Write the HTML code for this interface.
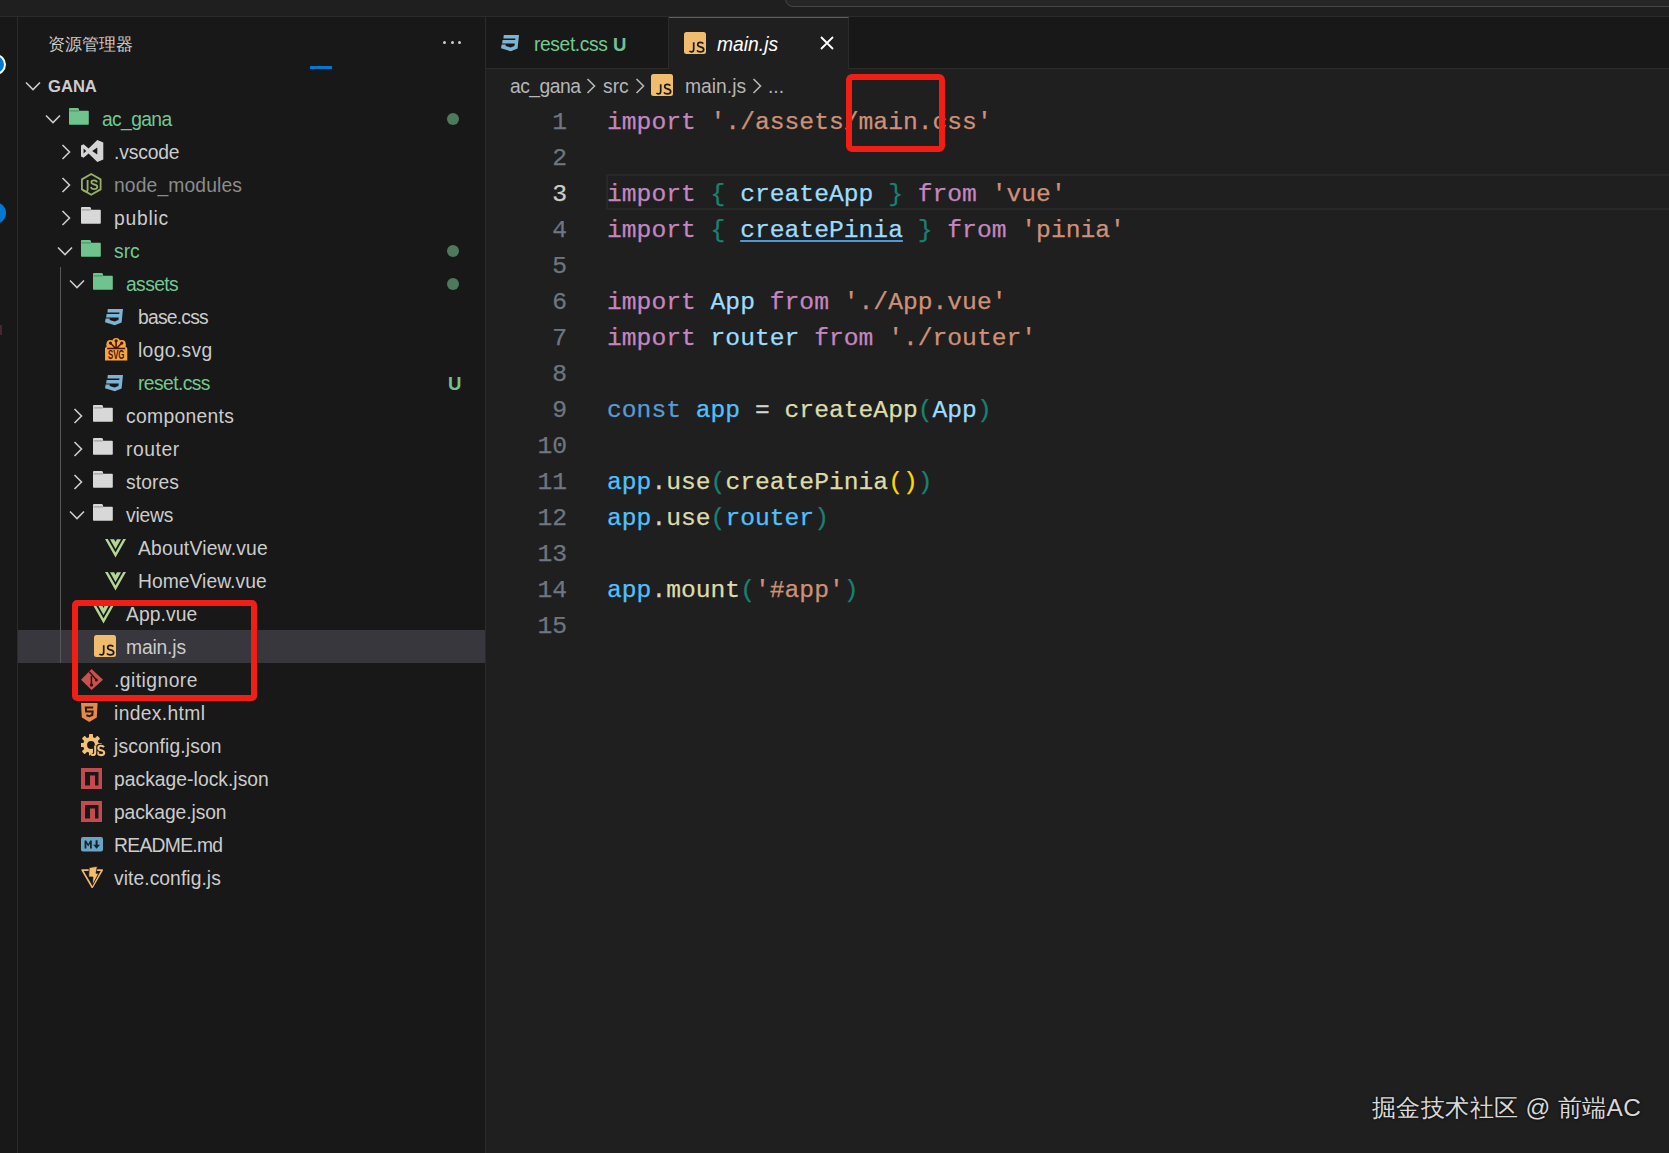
<!DOCTYPE html>
<html><head><meta charset="utf-8">
<style>
*{margin:0;padding:0;box-sizing:border-box}
html,body{width:1669px;height:1153px;overflow:hidden;background:#1f1f1f;font-family:"Liberation Sans",sans-serif;position:relative}
.abs{position:absolute}
.lbl{height:33px;line-height:33px;font-size:19.3px;white-space:nowrap}
.code{position:absolute;left:486px;width:1183px;height:36px;line-height:36px;font-family:"Liberation Mono",monospace;font-size:24.67px;white-space:pre;color:#d4d4d4;-webkit-text-stroke:0.25px currentColor}
.code .ln{position:absolute;left:0;width:81px;text-align:right;color:#6e7681}
.code .tx{position:absolute;left:121px}
.kw{color:#c586c0}.str{color:#ce9178}.fn{color:#dcdcaa}.var{color:#9cdcfe}.cst{color:#4fc1ff}.bl{color:#569cd6}.br1{color:#178272}.br2{color:#ffd700}
.ul{text-decoration:underline;text-decoration-color:#4b9ad6;text-underline-offset:3px}
</style></head><body>
<div class="abs" style="left:0;top:0;width:1669px;height:17px;background:#1f1f1f;border-bottom:1px solid #2b2b2b"></div>
<div class="abs" style="left:785px;top:-30px;width:1000px;height:37px;border:1px solid #454545;border-radius:8px;background:#262626"></div>
<div class="abs" style="left:0;top:17px;width:18px;height:1136px;background:#181818;border-right:1px solid #2b2b2b"></div>
<div class="abs" style="left:-15px;top:54px;width:21px;height:21px;border-radius:50%;background:#0078d4;border:2px solid #ffffff"></div>
<div class="abs" style="left:-16px;top:202px;width:22px;height:22px;border-radius:50%;background:#0078d4"></div>
<div class="abs" style="left:0;top:325px;width:2px;height:10px;background:#4a2430"></div>
<div class="abs" style="left:18px;top:17px;width:468px;height:1136px;background:#181818;border-right:1px solid #2b2b2b"></div>
<div class="abs" style="left:48px;top:28px;font-size:17px;line-height:33px;color:#cccccc">资源管理器</div>
<div class="abs" style="left:443px;top:41px;width:3px;height:3px;border-radius:50%;background:#cccccc"></div>
<div class="abs" style="left:450.5px;top:41px;width:3px;height:3px;border-radius:50%;background:#cccccc"></div>
<div class="abs" style="left:458px;top:41px;width:3px;height:3px;border-radius:50%;background:#cccccc"></div>
<div class="abs" style="left:310px;top:66px;width:22px;height:3px;background:#0078d4"></div>
<svg class="abs" style="left:25px;top:81px" width="16" height="10" viewBox="0 0 16 10"><path d="M1 1.5 L8 8.5 L15 1.5" fill="none" stroke="#cccccc" stroke-width="1.6"/></svg><div class="abs lbl" style="left:48px;top:70px;font-weight:bold;font-size:16.6px;color:#cccccc">GANA</div><svg class="abs" style="left:44.5px;top:113.5px" width="16" height="10" viewBox="0 0 16 10"><path d="M1 1.5 L8 8.5 L15 1.5" fill="none" stroke="#cccccc" stroke-width="1.6"/></svg><svg class="abs" style="left:69px;top:108.4px" width="20" height="17" viewBox="0 0 20 17"><path d="M0 1 Q0 0 1 0 H8.6 Q9.6 0 9.9 1 L10.2 2.8 H19 Q19.8 2.8 19.8 3.6 V16 Q19.8 16.8 19 16.8 H0.8 Q0 16.8 0 16Z" fill="#6fc48d"/><path d="M0.6 2.9 H9.8" stroke="#181818" stroke-width="0.6" opacity="0.6"/></svg><div class="abs lbl" style="left:102px;top:103px;color:#73c991;letter-spacing:-0.633px">ac_gana</div><div class="abs" style="left:447px;top:112.5px;width:12px;height:12px;border-radius:50%;background:#4d7a5c"></div><svg class="abs" style="left:60.5px;top:143.5px" width="10" height="16" viewBox="0 0 10 16"><path d="M1.5 1 L8.5 8 L1.5 15" fill="none" stroke="#cccccc" stroke-width="1.6"/></svg><svg class="abs" style="left:81px;top:139.9px" width="23" height="22" viewBox="0 0 23 22"><path d="M16.3 0 L22.3 2.6 V19.4 L16.3 22 L7.6 13.6 L2.6 17.8 L0 16.4 V5.6 L2.6 4.2 L7.6 8.4Z M16.3 7.6 L11.2 11 L16.3 14.6Z M2.6 8.6 V13.4 L5.2 11Z" fill="#d4d4d4" fill-rule="evenodd"/></svg><div class="abs lbl" style="left:114px;top:136px;color:#cccccc;letter-spacing:-0.15px">.vscode</div><svg class="abs" style="left:60.5px;top:176.5px" width="10" height="16" viewBox="0 0 10 16"><path d="M1.5 1 L8.5 8 L1.5 15" fill="none" stroke="#cccccc" stroke-width="1.6"/></svg><svg class="abs" style="left:81px;top:173px" width="21" height="23" viewBox="0 0 21 23"><path d="M10.2 1 L19.6 6.4 V16.4 L10.2 21.8 L0.9 16.4 V6.4Z" fill="none" stroke="#96b066" stroke-width="1.8" stroke-linejoin="round"/><path d="M6.6 7 V17.2 Q6.6 18.6 5 18.6 Q3.8 18.6 2.2 17.4" fill="none" stroke="#96b066" stroke-width="1.8"/><path d="M16 9.4 Q15.6 7.4 13.2 7.3 Q10.3 7.2 10.4 9.3 Q10.5 11 13.2 11.5 Q16.4 12.1 16.3 14 Q16.2 16.1 13.1 16.1 Q10.4 16.1 9.9 13.9" fill="none" stroke="#96b066" stroke-width="1.8"/></svg><div class="abs lbl" style="left:114px;top:169px;color:#8c8c8c;letter-spacing:0.136px">node_modules</div><svg class="abs" style="left:60.5px;top:209.5px" width="10" height="16" viewBox="0 0 10 16"><path d="M1.5 1 L8.5 8 L1.5 15" fill="none" stroke="#cccccc" stroke-width="1.6"/></svg><svg class="abs" style="left:81px;top:207.4px" width="20" height="17" viewBox="0 0 20 17"><path d="M0 1 Q0 0 1 0 H8.6 Q9.6 0 9.9 1 L10.2 2.8 H19 Q19.8 2.8 19.8 3.6 V16 Q19.8 16.8 19 16.8 H0.8 Q0 16.8 0 16Z" fill="#d8d8d8"/><path d="M0.6 2.9 H9.8" stroke="#181818" stroke-width="0.6" opacity="0.6"/></svg><div class="abs lbl" style="left:114px;top:202px;color:#cccccc;letter-spacing:0.74px">public</div><svg class="abs" style="left:56.5px;top:245.5px" width="16" height="10" viewBox="0 0 16 10"><path d="M1 1.5 L8 8.5 L15 1.5" fill="none" stroke="#cccccc" stroke-width="1.6"/></svg><svg class="abs" style="left:81px;top:240.4px" width="20" height="17" viewBox="0 0 20 17"><path d="M0 1 Q0 0 1 0 H8.6 Q9.6 0 9.9 1 L10.2 2.8 H19 Q19.8 2.8 19.8 3.6 V16 Q19.8 16.8 19 16.8 H0.8 Q0 16.8 0 16Z" fill="#6fc48d"/><path d="M0.6 2.9 H9.8" stroke="#181818" stroke-width="0.6" opacity="0.6"/></svg><div class="abs lbl" style="left:114px;top:235px;color:#73c991;letter-spacing:0px">src</div><div class="abs" style="left:447px;top:244.5px;width:12px;height:12px;border-radius:50%;background:#4d7a5c"></div><svg class="abs" style="left:68.5px;top:278.5px" width="16" height="10" viewBox="0 0 16 10"><path d="M1 1.5 L8 8.5 L15 1.5" fill="none" stroke="#cccccc" stroke-width="1.6"/></svg><svg class="abs" style="left:93px;top:273.4px" width="20" height="17" viewBox="0 0 20 17"><path d="M0 1 Q0 0 1 0 H8.6 Q9.6 0 9.9 1 L10.2 2.8 H19 Q19.8 2.8 19.8 3.6 V16 Q19.8 16.8 19 16.8 H0.8 Q0 16.8 0 16Z" fill="#6fc48d"/><path d="M0.6 2.9 H9.8" stroke="#181818" stroke-width="0.6" opacity="0.6"/></svg><div class="abs lbl" style="left:126px;top:268px;color:#73c991;letter-spacing:-0.6px">assets</div><div class="abs" style="left:447px;top:277.5px;width:12px;height:12px;border-radius:50%;background:#4d7a5c"></div><svg class="abs" style="left:105px;top:308.8px" width="18" height="17" viewBox="0 0 18 17"><path d="M2.8 0 H18 L16.6 13.4 L9.8 16.3 L0 13.3 L0.6 9.5 H4.8 L4.6 10.9 L9.6 12.5 L13.4 10.9 L13.8 8.6 H1.1 L1.6 5.1 H14.2 L14.5 3.4 H2.4Z" fill="#7db3d3"/></svg><div class="abs lbl" style="left:138px;top:301px;color:#cccccc;letter-spacing:-0.771px">base.css</div><svg class="abs" style="left:105px;top:338px" width="23" height="23" viewBox="0 0 23 23"><g fill="#f3a640"><circle cx="5.4" cy="5.8" r="3.9"/><circle cx="11.1" cy="3.9" r="3.9"/><circle cx="16.8" cy="5.8" r="3.9"/><path d="M1.5 6 H20.7 V9 Q22.3 9 22.3 10.5 V22.6 H0 V10.5 Q0 9 1.5 9Z"/></g><path d="M5.4 5.1 L10.2 10 M11.1 2.8 V10 M16.8 5.1 L12 10 M2.2 10.6 H20.2" stroke="#4a1408" stroke-width="1.5" fill="none"/><circle cx="5.4" cy="5.1" r="1.6" fill="#4a1408"/><circle cx="11.1" cy="2.8" r="1.6" fill="#4a1408"/><circle cx="16.8" cy="5.1" r="1.6" fill="#4a1408"/><text x="11.2" y="21.4" font-family="Liberation Sans" font-weight="bold" font-size="12.5" fill="#4a1408" text-anchor="middle" textLength="16.5" lengthAdjust="spacingAndGlyphs">SVG</text></svg><div class="abs lbl" style="left:138px;top:334px;color:#cccccc;letter-spacing:0.329px">logo.svg</div><svg class="abs" style="left:105px;top:374.8px" width="18" height="17" viewBox="0 0 18 17"><path d="M2.8 0 H18 L16.6 13.4 L9.8 16.3 L0 13.3 L0.6 9.5 H4.8 L4.6 10.9 L9.6 12.5 L13.4 10.9 L13.8 8.6 H1.1 L1.6 5.1 H14.2 L14.5 3.4 H2.4Z" fill="#7db3d3"/></svg><div class="abs lbl" style="left:138px;top:367px;color:#73c991;letter-spacing:-0.588px">reset.css</div><div class="abs lbl" style="left:448px;top:367px;color:#74bf94;font-weight:bold;font-size:18.6px">U</div><svg class="abs" style="left:72.5px;top:407.5px" width="10" height="16" viewBox="0 0 10 16"><path d="M1.5 1 L8.5 8 L1.5 15" fill="none" stroke="#cccccc" stroke-width="1.6"/></svg><svg class="abs" style="left:93px;top:405.4px" width="20" height="17" viewBox="0 0 20 17"><path d="M0 1 Q0 0 1 0 H8.6 Q9.6 0 9.9 1 L10.2 2.8 H19 Q19.8 2.8 19.8 3.6 V16 Q19.8 16.8 19 16.8 H0.8 Q0 16.8 0 16Z" fill="#d8d8d8"/><path d="M0.6 2.9 H9.8" stroke="#181818" stroke-width="0.6" opacity="0.6"/></svg><div class="abs lbl" style="left:126px;top:400px;color:#cccccc;letter-spacing:0.322px">components</div><svg class="abs" style="left:72.5px;top:440.5px" width="10" height="16" viewBox="0 0 10 16"><path d="M1.5 1 L8.5 8 L1.5 15" fill="none" stroke="#cccccc" stroke-width="1.6"/></svg><svg class="abs" style="left:93px;top:438.4px" width="20" height="17" viewBox="0 0 20 17"><path d="M0 1 Q0 0 1 0 H8.6 Q9.6 0 9.9 1 L10.2 2.8 H19 Q19.8 2.8 19.8 3.6 V16 Q19.8 16.8 19 16.8 H0.8 Q0 16.8 0 16Z" fill="#d8d8d8"/><path d="M0.6 2.9 H9.8" stroke="#181818" stroke-width="0.6" opacity="0.6"/></svg><div class="abs lbl" style="left:126px;top:433px;color:#cccccc;letter-spacing:0.56px">router</div><svg class="abs" style="left:72.5px;top:473.5px" width="10" height="16" viewBox="0 0 10 16"><path d="M1.5 1 L8.5 8 L1.5 15" fill="none" stroke="#cccccc" stroke-width="1.6"/></svg><svg class="abs" style="left:93px;top:471.4px" width="20" height="17" viewBox="0 0 20 17"><path d="M0 1 Q0 0 1 0 H8.6 Q9.6 0 9.9 1 L10.2 2.8 H19 Q19.8 2.8 19.8 3.6 V16 Q19.8 16.8 19 16.8 H0.8 Q0 16.8 0 16Z" fill="#d8d8d8"/><path d="M0.6 2.9 H9.8" stroke="#181818" stroke-width="0.6" opacity="0.6"/></svg><div class="abs lbl" style="left:126px;top:466px;color:#cccccc;letter-spacing:0.08px">stores</div><svg class="abs" style="left:68.5px;top:509.5px" width="16" height="10" viewBox="0 0 16 10"><path d="M1 1.5 L8 8.5 L15 1.5" fill="none" stroke="#cccccc" stroke-width="1.6"/></svg><svg class="abs" style="left:93px;top:504.4px" width="20" height="17" viewBox="0 0 20 17"><path d="M0 1 Q0 0 1 0 H8.6 Q9.6 0 9.9 1 L10.2 2.8 H19 Q19.8 2.8 19.8 3.6 V16 Q19.8 16.8 19 16.8 H0.8 Q0 16.8 0 16Z" fill="#d8d8d8"/><path d="M0.6 2.9 H9.8" stroke="#181818" stroke-width="0.6" opacity="0.6"/></svg><div class="abs lbl" style="left:126px;top:499px;color:#cccccc;letter-spacing:-0.2px">views</div><svg class="abs" style="left:105px;top:538.6px" width="21" height="19" viewBox="0 0 21 19"><path d="M0 0 H2.8 L10.5 13.5 L18.2 0 H21 L10.5 18.4Z" fill="#b5d592"/><path d="M5 0.3 H9.1 L10.5 2.9 L11.9 0.3 H16 L10.5 9.9Z" fill="#b5d592"/></svg><div class="abs lbl" style="left:138px;top:532px;color:#cccccc;letter-spacing:0.208px">AboutView.vue</div><svg class="abs" style="left:105px;top:571.6px" width="21" height="19" viewBox="0 0 21 19"><path d="M0 0 H2.8 L10.5 13.5 L18.2 0 H21 L10.5 18.4Z" fill="#b5d592"/><path d="M5 0.3 H9.1 L10.5 2.9 L11.9 0.3 H16 L10.5 9.9Z" fill="#b5d592"/></svg><div class="abs lbl" style="left:138px;top:565px;color:#cccccc;letter-spacing:0.036px">HomeView.vue</div><svg class="abs" style="left:93px;top:604.6px" width="21" height="19" viewBox="0 0 21 19"><path d="M0 0 H2.8 L10.5 13.5 L18.2 0 H21 L10.5 18.4Z" fill="#b5d592"/><path d="M5 0.3 H9.1 L10.5 2.9 L11.9 0.3 H16 L10.5 9.9Z" fill="#b5d592"/></svg><div class="abs lbl" style="left:126px;top:598px;color:#cccccc;letter-spacing:0.067px">App.vue</div><div class="abs" style="left:18px;top:630px;width:467px;height:33px;background:#37373d"></div><svg class="abs" style="left:93.5px;top:635px" width="22" height="22" viewBox="0 0 22 22"><rect x="0" y="0" width="22" height="22" rx="2.5" fill="#f0bd6e"/><path d="M9.7 10.2 V17.2 Q9.7 19.9 7.4 19.9 Q6.1 19.9 5.5 18.9 M19.3 11.7 Q18.5 10.3 16.4 10.3 Q13.7 10.3 13.7 12.6 Q13.7 14.4 16.4 14.9 Q19.7 15.5 19.7 17.5 Q19.7 19.9 16.3 19.9 Q13.8 19.9 13 18.4" fill="none" stroke="#1d1a14" stroke-width="1.7"/></svg><div class="abs lbl" style="left:126px;top:631px;color:#cccccc;letter-spacing:-0.167px">main.js</div><svg class="abs" style="left:81px;top:669px" width="22" height="22" viewBox="0 0 22 22"><path d="M10.6 0 L22 10.8 L10.6 21 L0 10.8Z" fill="#c65350"/><path d="M8.2 2.8 L15.6 11 M10.4 7 V15.8" stroke="#3a1210" stroke-width="1.5"/><circle cx="10.5" cy="16" r="1.7" fill="#3a1210"/><circle cx="15.4" cy="10.9" r="1.5" fill="#3a1210"/></svg><div class="abs lbl" style="left:114px;top:664px;color:#cccccc;letter-spacing:0.456px">.gitignore</div><svg class="abs" style="left:81.3px;top:703px" width="17" height="19" viewBox="0 0 17 19"><path d="M0 0 H16.6 L15.8 14.6 L8.3 19 L0.8 14.6Z" fill="#e5894c"/><path d="M12.2 4.4 H4.8 L5.1 8.6 H11.6 L11.3 12 L8.3 13.2 L5.4 12.2" fill="none" stroke="#2a1a10" stroke-width="2"/></svg><div class="abs lbl" style="left:114px;top:697px;color:#cccccc;letter-spacing:0.344px">index.html</div><svg class="abs" style="left:81px;top:734px" width="25" height="23" viewBox="0 0 25 23"><g fill="#f4c274"><circle cx="10" cy="11" r="7.9"/><rect x="8" y="0" width="4" height="5" rx="0.8" transform="rotate(0 10 11)"/><rect x="8" y="0" width="4" height="5" rx="0.8" transform="rotate(45 10 11)"/><rect x="8" y="0" width="4" height="5" rx="0.8" transform="rotate(90 10 11)"/><rect x="8" y="0" width="4" height="5" rx="0.8" transform="rotate(135 10 11)"/><rect x="8" y="0" width="4" height="5" rx="0.8" transform="rotate(180 10 11)"/><rect x="8" y="0" width="4" height="5" rx="0.8" transform="rotate(225 10 11)"/><rect x="8" y="0" width="4" height="5" rx="0.8" transform="rotate(270 10 11)"/><rect x="8" y="0" width="4" height="5" rx="0.8" transform="rotate(315 10 11)"/></g><circle cx="10" cy="11" r="3.9" fill="#181818"/><path d="M14.2 11.6 V18.4 Q14.2 21 11.8 21 Q10.6 21 10 20.2 M23 13.2 Q22 11.8 20 11.8 Q17.3 11.8 17.3 14 Q17.3 15.8 20 16.3 Q23.2 16.9 23.2 18.8 Q23.2 21.1 20 21.1 Q17.6 21.1 16.8 19.6" fill="none" stroke="#181818" stroke-width="4.4"/><path d="M14.2 11.6 V18.4 Q14.2 21 11.8 21 Q10.6 21 10 20.2 M23 13.2 Q22 11.8 20 11.8 Q17.3 11.8 17.3 14 Q17.3 15.8 20 16.3 Q23.2 16.9 23.2 18.8 Q23.2 21.1 20 21.1 Q17.6 21.1 16.8 19.6" fill="none" stroke="#f4c274" stroke-width="2.1"/></svg><div class="abs lbl" style="left:114px;top:730px;color:#cccccc;letter-spacing:0.117px">jsconfig.json</div><svg class="abs" style="left:81px;top:768.2px" width="21" height="21" viewBox="0 0 21 21"><path d="M0 0 H21 V21 H0Z M4 4 V17.5 H9 V7.5 H14 V17.5 H17.5 V4Z" fill="#c54a50" fill-rule="evenodd"/></svg><div class="abs lbl" style="left:114px;top:763px;color:#cccccc;letter-spacing:0.031px">package-lock.json</div><svg class="abs" style="left:81px;top:801.2px" width="21" height="21" viewBox="0 0 21 21"><path d="M0 0 H21 V21 H0Z M4 4 V17.5 H9 V7.5 H14 V17.5 H17.5 V4Z" fill="#c54a50" fill-rule="evenodd"/></svg><div class="abs lbl" style="left:114px;top:796px;color:#cccccc;letter-spacing:-0.1px">package.json</div><svg class="abs" style="left:81px;top:836.9px" width="22" height="15" viewBox="0 0 22 15"><rect x="0" y="0" width="22" height="14.5" rx="2" fill="#68a4c6"/><path d="M3.6 11.5 V3.6 H5.2 L7.2 7 L9.2 3.6 H10.8 V11.5 H9 V6.6 L7.2 9.6 L5.4 6.6 V11.5Z" fill="#15222c"/><path d="M14.6 3.2 H16.6 V7.8 H19 L15.6 11.8 L12.2 7.8 H14.6Z" fill="#15222c"/></svg><div class="abs lbl" style="left:114px;top:829px;color:#cccccc;letter-spacing:-0.7px">README.md</div><svg class="abs" style="left:81px;top:865.6px" width="23" height="23" viewBox="0 0 23 23"><path d="M1.2 4.1 H21.2 L11.2 21.2Z" fill="none" stroke="#efb877" stroke-width="1.7" stroke-linejoin="round"/><path d="M8.2 1.6 L16.4 0.3 L15 7.2 H17.8 L11.4 19.6 L11.9 11 H7.6Z" fill="#f4bd6c" stroke="#181818" stroke-width="0.8"/></svg><div class="abs lbl" style="left:114px;top:862px;color:#cccccc;letter-spacing:0.054px">vite.config.js</div><div class="abs" style="left:60px;top:267px;width:1px;height:396px;background:#585858"></div>
<div class="abs" style="left:486px;top:17px;width:1183px;height:52px;background:#181818;border-bottom:1px solid #2b2b2b"></div>
<div class="abs" style="left:486px;top:17px;width:183px;height:51px;border-right:1px solid #2b2b2b"></div>
<svg class="abs" style="left:500.5px;top:35px" width="18" height="17" viewBox="0 0 18 17"><path d="M2.8 0 H18 L16.6 13.4 L9.8 16.3 L0 13.3 L0.6 9.5 H4.8 L4.6 10.9 L9.6 12.5 L13.4 10.9 L13.8 8.6 H1.1 L1.6 5.1 H14.2 L14.5 3.4 H2.4Z" fill="#7db3d3"/></svg>
<div class="abs" style="left:534px;top:28px;line-height:33px;font-size:19.3px;color:#73c991;letter-spacing:-0.4px">reset.css</div>
<div class="abs" style="left:613px;top:28px;line-height:33px;font-size:18.6px;font-weight:bold;color:#74bf94">U</div>
<div class="abs" style="left:669px;top:17px;width:180px;height:52px;background:#1f1f1f;border-right:1px solid #2b2b2b;border-top:1px solid #0078d4"></div>
<svg class="abs" style="left:684px;top:32px" width="22" height="22" viewBox="0 0 22 22"><rect x="0" y="0" width="22" height="22" rx="2.5" fill="#f0bd6e"/><path d="M9.7 10.2 V17.2 Q9.7 19.9 7.4 19.9 Q6.1 19.9 5.5 18.9 M19.3 11.7 Q18.5 10.3 16.4 10.3 Q13.7 10.3 13.7 12.6 Q13.7 14.4 16.4 14.9 Q19.7 15.5 19.7 17.5 Q19.7 19.9 16.3 19.9 Q13.8 19.9 13 18.4" fill="none" stroke="#1d1a14" stroke-width="1.7"/></svg>
<div class="abs" style="left:717px;top:28px;line-height:33px;font-size:19.3px;color:#ffffff;font-style:italic">main.js</div>
<svg class="abs" style="left:819px;top:35px" width="16" height="16" viewBox="0 0 16 16"><path d="M2 2 L14 14 M14 2 L2 14" stroke="#ffffff" stroke-width="1.8"/></svg>
<div class="abs" style="left:510px;top:70px;line-height:33px;font-size:19.3px;color:#b6b6b6;letter-spacing:-0.5px">ac_gana</div>
<svg class="abs" style="left:586px;top:78px" width="10" height="16" viewBox="0 0 10 16"><path d="M1.5 1 L8.5 8 L1.5 15" fill="none" stroke="#b6b6b6" stroke-width="1.6"/></svg>
<div class="abs" style="left:603px;top:70px;line-height:33px;font-size:19.3px;color:#b6b6b6">src</div>
<svg class="abs" style="left:635px;top:78px" width="10" height="16" viewBox="0 0 10 16"><path d="M1.5 1 L8.5 8 L1.5 15" fill="none" stroke="#b6b6b6" stroke-width="1.6"/></svg>
<svg class="abs" style="left:651px;top:74px" width="22" height="22" viewBox="0 0 22 22"><rect x="0" y="0" width="22" height="22" rx="2.5" fill="#f0bd6e"/><path d="M9.7 10.2 V17.2 Q9.7 19.9 7.4 19.9 Q6.1 19.9 5.5 18.9 M19.3 11.7 Q18.5 10.3 16.4 10.3 Q13.7 10.3 13.7 12.6 Q13.7 14.4 16.4 14.9 Q19.7 15.5 19.7 17.5 Q19.7 19.9 16.3 19.9 Q13.8 19.9 13 18.4" fill="none" stroke="#1d1a14" stroke-width="1.7"/></svg>
<div class="abs" style="left:685px;top:70px;line-height:33px;font-size:19.3px;color:#b6b6b6">main.js</div>
<svg class="abs" style="left:752px;top:78px" width="10" height="16" viewBox="0 0 10 16"><path d="M1.5 1 L8.5 8 L1.5 15" fill="none" stroke="#b6b6b6" stroke-width="1.6"/></svg>
<div class="abs" style="left:768px;top:70px;line-height:33px;font-size:19.3px;color:#b6b6b6">...</div>
<div class="abs" style="left:606px;top:174px;width:1063px;height:36px;border:2px solid #282828;border-right:none"></div><div class="code" style="top:104px"><span class="ln" style="">1</span><span class="tx"><span class="kw">import</span> <span class="str">'./assets/main.css'</span></span></div><div class="code" style="top:140px"><span class="ln" style="">2</span><span class="tx"></span></div><div class="code" style="top:176px"><span class="ln" style="color:#cccccc">3</span><span class="tx"><span class="kw">import</span> <span class="br1">{</span> <span class="var">createApp</span> <span class="br1">}</span> <span class="kw">from</span> <span class="str">'vue'</span></span></div><div class="code" style="top:212px"><span class="ln" style="">4</span><span class="tx"><span class="kw">import</span> <span class="br1">{</span> <span class="var ul">createPinia</span> <span class="br1">}</span> <span class="kw">from</span> <span class="str">'pinia'</span></span></div><div class="code" style="top:248px"><span class="ln" style="">5</span><span class="tx"></span></div><div class="code" style="top:284px"><span class="ln" style="">6</span><span class="tx"><span class="kw">import</span> <span class="var">App</span> <span class="kw">from</span> <span class="str">'./App.vue'</span></span></div><div class="code" style="top:320px"><span class="ln" style="">7</span><span class="tx"><span class="kw">import</span> <span class="var">router</span> <span class="kw">from</span> <span class="str">'./router'</span></span></div><div class="code" style="top:356px"><span class="ln" style="">8</span><span class="tx"></span></div><div class="code" style="top:392px"><span class="ln" style="">9</span><span class="tx"><span class="bl">const</span> <span class="cst">app</span> = <span class="fn">createApp</span><span class="br1">(</span><span class="var">App</span><span class="br1">)</span></span></div><div class="code" style="top:428px"><span class="ln" style="">10</span><span class="tx"></span></div><div class="code" style="top:464px"><span class="ln" style="">11</span><span class="tx"><span class="cst">app</span>.<span class="fn">use</span><span class="br1">(</span><span class="fn">createPinia</span><span class="br2">()</span><span class="br1">)</span></span></div><div class="code" style="top:500px"><span class="ln" style="">12</span><span class="tx"><span class="cst">app</span>.<span class="fn">use</span><span class="br1">(</span><span class="cst">router</span><span class="br1">)</span></span></div><div class="code" style="top:536px"><span class="ln" style="">13</span><span class="tx"></span></div><div class="code" style="top:572px"><span class="ln" style="">14</span><span class="tx"><span class="cst">app</span>.<span class="fn">mount</span><span class="br1">(</span><span class="str">'#app'</span><span class="br1">)</span></span></div><div class="code" style="top:608px"><span class="ln" style="">15</span><span class="tx"></span></div>
<div class="abs" style="left:72px;top:600px;width:184.5px;height:101px;border:6px solid #f01e14;border-radius:5px"></div>
<div class="abs" style="left:846px;top:74px;width:98.5px;height:77.5px;border:6px solid #f01e14;border-radius:6px"></div>
<div class="abs" style="left:1372px;top:1090px;font-size:24.4px;letter-spacing:0.38px;line-height:36px;color:#d8d8d8;text-shadow:0 0 3px #000">掘金技术社区 @ 前端AC</div>
</body></html>
